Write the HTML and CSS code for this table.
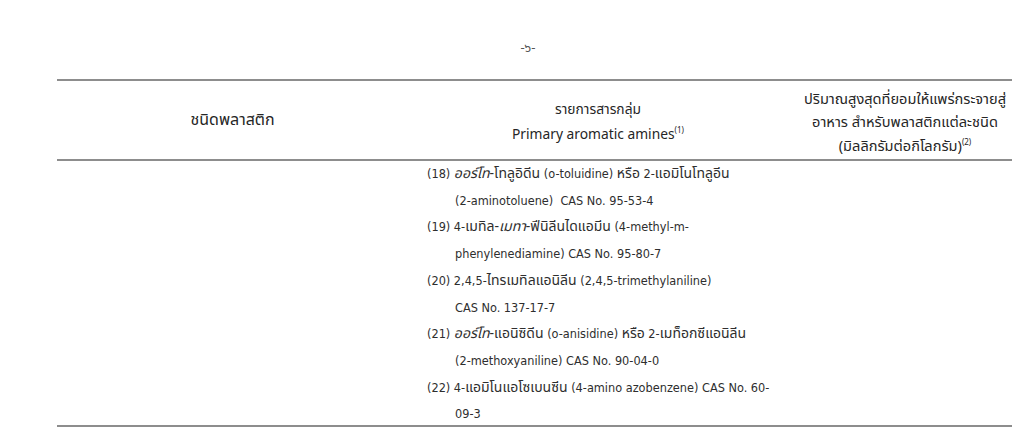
FILE: index.html
```html
<!DOCTYPE html>
<html lang="th">
<head>
<meta charset="utf-8">
<title>Primary aromatic amines</title>
<link rel="stylesheet" href="styles.css">
</head>
<body>
<div class="page">
  <div class="page-no">-๖-</div>
  <div class="spec">
    <div class="spec-head">
      <div class="h1">ชนิดพลาสติก</div>
      <div class="h2">รายการสารกลุ่ม<br>Primary aromatic amines<sup>(1)</sup></div>
      <div class="h3">ปริมาณสูงสุดที่ยอมให้แพร่กระจายสู่<br>อาหาร สำหรับพลาสติกแต่ละชนิด<br>(มิลลิกรัมต่อกิโลกรัม)<sup>(2)</sup></div>
    </div>
    <div class="spec-body">
      <div class="cell"></div>
      <ol class="items">
        <li>(18) <i class="th">ออร์โท</i><span class="th">-โทลูอิดีน</span> (o-toluidine) <span class="th">หรือ</span> 2-<span class="th">แอมิโนโทลูอีน</span><br>(2-aminotoluene)&nbsp; CAS No. 95-53-4</li>
        <li>(19) 4-<span class="th">เมทิล-</span><i class="th">เมทา</i><span class="th">-ฟีนิลีนไดแอมีน</span> (4-methyl-m-<br>phenylenediamine) CAS No. 95-80-7</li>
        <li>(20) 2,4,5-<span class="th">ไทรเมทิลแอนิลีน</span> (2,4,5-trimethylaniline)<br>CAS No. 137-17-7</li>
        <li>(21) <i class="th">ออร์โท</i><span class="th">-แอนิซิดีน</span> (o-anisidine) <span class="th">หรือ</span> 2-<span class="th">เมท็อกซีแอนิลีน</span><br>(2-methoxyaniline) CAS No. 90-04-0</li>
        <li>(22) 4-<span class="th">แอมิโนแอโซเบนซีน</span> (4-amino azobenzene) CAS No. 60-<br>09-3</li>
      </ol>
      <div class="cell"></div>
    </div>
  </div>
</div>
</body>
</html>
```

FILE: styles.css
```css
html, body {
  margin: 0;
  padding: 0;
  background: #ffffff;
}
body {
  font-family: "Noto Sans", "Noto Sans Thai", "Liberation Sans", sans-serif;
  color: #2b2b2b;
  font-size: 11.2px;
}
.page {
  width: 1024px;
  height: 429px;
  overflow: hidden;
  padding-top: 37px;
  box-sizing: border-box;
}
.page-no {
  text-align: center;
  padding-left: 32px;
  font-size: 13px;
  line-height: 20px;
  color: #555;
}
.spec {
  margin-top: 22px;
  margin-left: 57px;
  width: 955px;
}
.spec-head {
  display: grid;
  grid-template-columns: 343px 396px 216px;
  height: 78px;
  align-items: center;
  text-align: center;
  border-top: 2px solid #8d8d8d;
  border-bottom: 2px solid #8d8d8d;
  color: #262626;
  font-size: 13.8px;
  line-height: 25.5px;
}
.h1 {
  padding-left: 8px;
  font-size: 16px;
}
.h2 {
  padding-top: 2px;
}
.h3 {
  padding-left: 2px;
  padding-top: 4px;
  font-size: 14.6px;
  line-height: 23.5px;
}
.spec-body {
  display: grid;
  grid-template-columns: 343px 396px 216px;
  border-bottom: 2px solid #8d8d8d;
}
sup {
  font-size: 8px;
  vertical-align: 6px;
  line-height: 0;
}
.items {
  list-style: none;
  margin: 0 0 -3px 0;
  padding: 0 0 0 55px;
  line-height: 26.7px;
  font-family: "DejaVu Sans Condensed", "Noto Sans", sans-serif;
  font-size: 12.6px;
  color: #2e2e2e;
  white-space: nowrap;
}
.items li {
  text-indent: -28px;
}
.items .th {
  font-family: "Noto Sans", "Noto Sans Thai", sans-serif;
  font-size: 14px;
  line-height: 1;
}
.items i {
  font-style: italic;
}
```
